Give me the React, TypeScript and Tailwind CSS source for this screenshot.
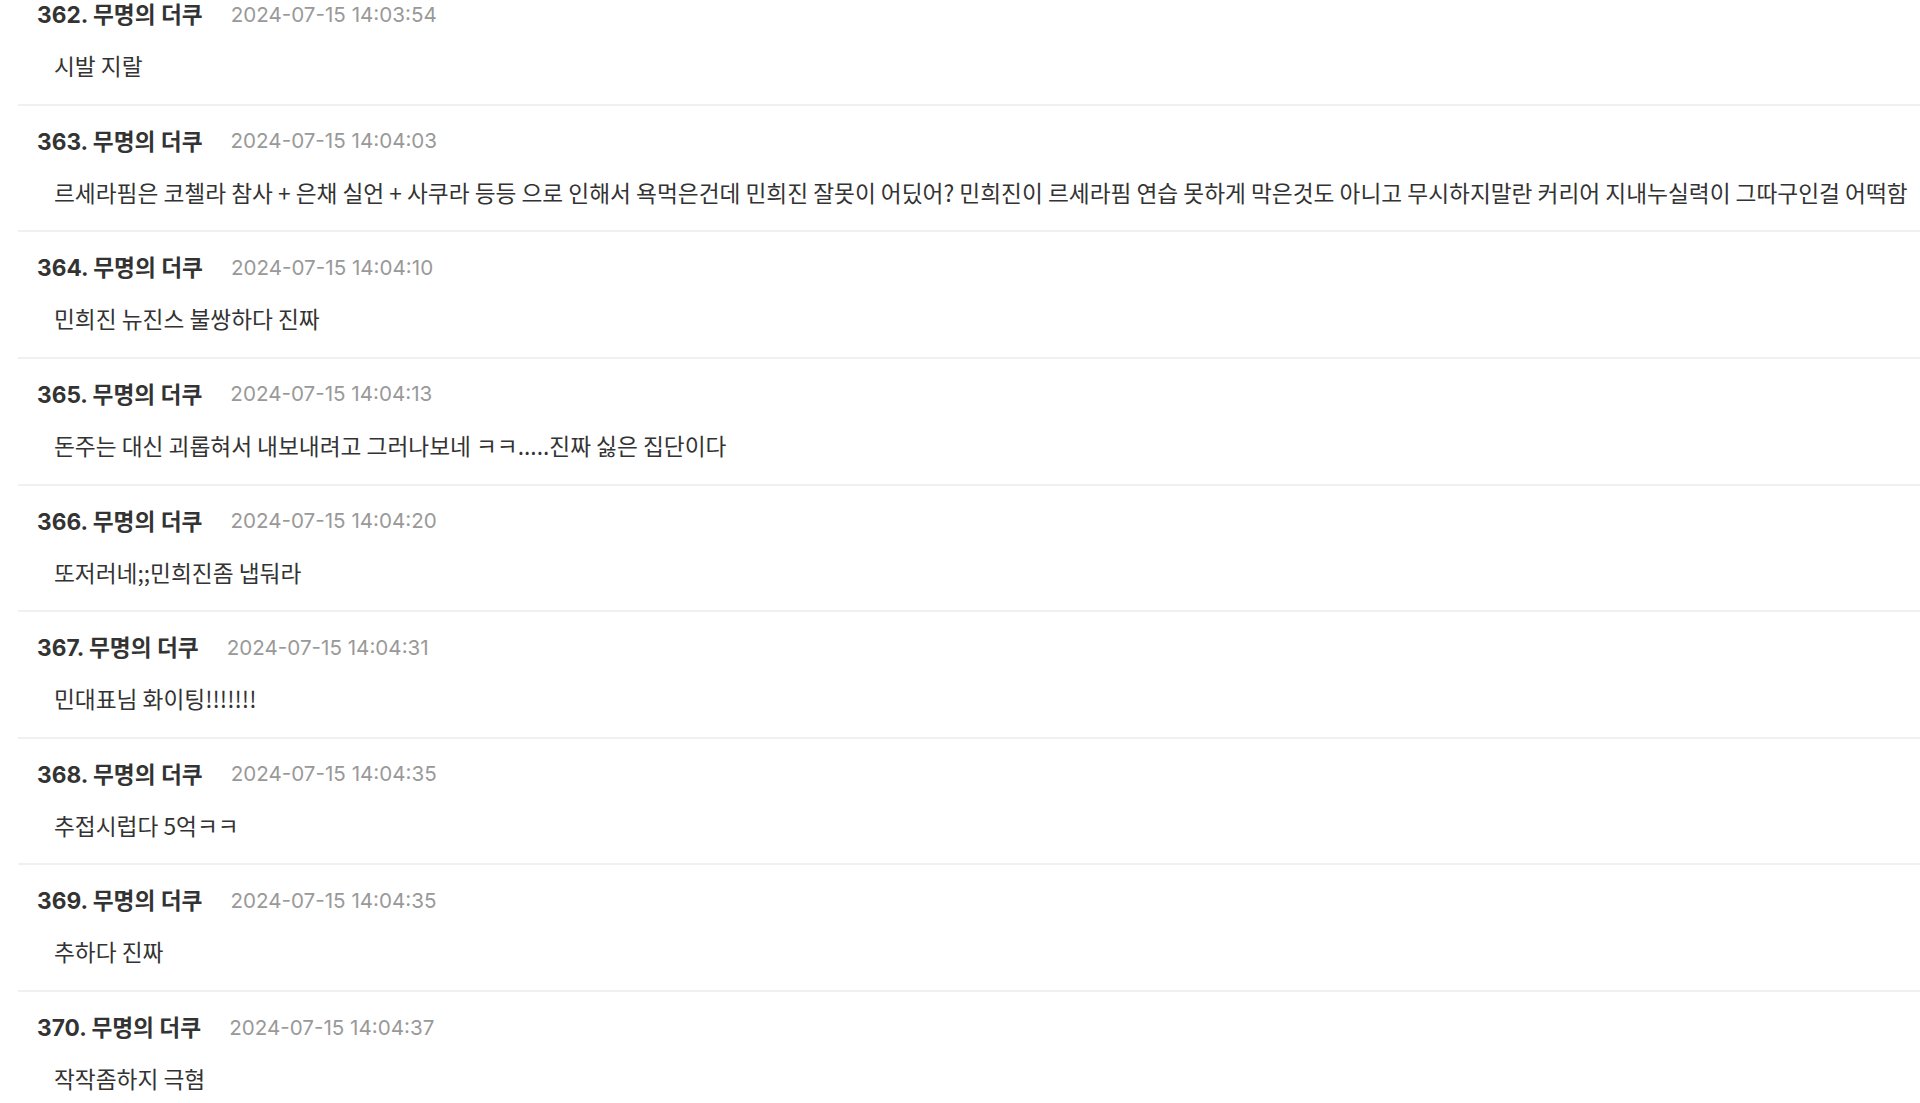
const comments = [
  { no: 362, date: "2024-07-15 14:03:54", body: "시발 지랄" },
  {
    no: 363,
    date: "2024-07-15 14:04:03",
    body: "르세라핌은 코첼라 참사 + 은채 실언 + 사쿠라 등등 으로 인해서 욕먹은건데 민희진 잘못이 어딨어? 민희진이 르세라핌 연습 못하게 막은것도 아니고 무시하지말란 커리어 지내누실력이 그따구인걸 어떡함",
  },
  { no: 364, date: "2024-07-15 14:04:10", body: "민희진 뉴진스 불쌍하다 진짜" },
  {
    no: 365,
    date: "2024-07-15 14:04:13",
    body: "돈주는 대신 괴롭혀서 내보내려고 그러나보네 ㅋㅋ.....진짜 싫은 집단이다",
  },
  { no: 366, date: "2024-07-15 14:04:20", body: "또저러네;;민희진좀 냅둬라" },
  { no: 367, date: "2024-07-15 14:04:31", body: "민대표님 화이팅!!!!!!!" },
  { no: 368, date: "2024-07-15 14:04:35", body: "추접시럽다 5억ㅋㅋ" },
  { no: 369, date: "2024-07-15 14:04:35", body: "추하다 진짜" },
  { no: 370, date: "2024-07-15 14:04:37", body: "작작좀하지 극혐" },
];

export default function App() {
  return (
    <div
      className="h-[1103px] overflow-hidden bg-white"
      style={{ fontFamily: 'Inter, "Noto Sans CJK KR", sans-serif' }}
    >
      <ul className="-mt-[21px] pl-[18px]">
        {comments.map((c) => (
          <li
            key={c.no}
            className="border-b-2 border-[#f0f0f0] pt-[21px] pb-[22.65px]"
          >
            <div className="flex h-[30px] items-center gap-[28px] pl-[19px]">
              <span className="text-[22.7px] font-bold text-[#333333]">
                {c.no}. 무명의 더쿠
              </span>
              <span className="text-[20.6px] text-[#999999]">{c.date}</span>
            </div>
            <p
              className="mt-[21px] h-[30px] whitespace-nowrap pl-[36px] text-[22.7px] leading-[30px] text-[#333333]"
              style={{ fontFamily: '"Noto Sans CJK KR", sans-serif' }}
            >
              {c.body}
            </p>
          </li>
        ))}
      </ul>
    </div>
  );
}
